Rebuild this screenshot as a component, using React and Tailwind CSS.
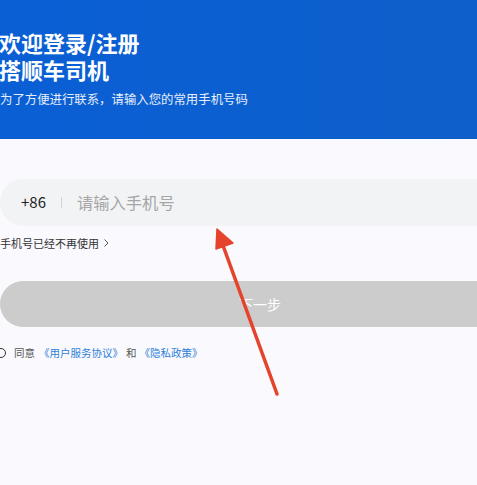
import React from "react";

const font = { fontFamily: '"Noto Sans CJK SC", "Noto Sans", sans-serif' };

// red annotation arrow drawn over the page
const Arrow = () => (
  <svg
    className="absolute left-0 top-0 pointer-events-none"
    width="477"
    height="485"
    viewBox="0 0 477 485"
  >
    <line x1="277" y1="394" x2="221" y2="240" stroke="#e5432b" strokeWidth="3.5" strokeLinecap="round" />
    <polygon points="217,229 216,249 233,243" fill="#e5432b" stroke="#e5432b" strokeWidth="1.5" strokeLinejoin="round" />
  </svg>
);

export default function App() {
  return (
    <div className="relative w-[477px] h-[485px] overflow-hidden bg-[#f9f9fe]" style={font}>
      <div className="h-[139px] bg-gradient-to-r from-[#0a5fd5] to-[#0e5fca] pt-[29px] text-white">
        <h1 className="text-[22px] font-bold leading-[27px] -ml-[1px]">
          欢迎登录/注册
          <br />
          搭顺车司机
        </h1>
        <p className="mt-[8px] text-[12.4px] leading-[16px] text-white/90">为了方便进行联系，请输入您的常用手机号码</p>
      </div>

      <div className="w-[520px] pt-[40px]">
        <div className="flex h-[47px] items-center rounded-full bg-[#f2f3f5] pl-[21px]">
          <span className="text-[15px] text-[#222]">+86</span>
          <span className="mx-[15px] h-[11px] w-px bg-[#d4d4d4]" />
          <span className="text-[16.3px] text-[#a6a6a6]">请输入手机号</span>
        </div>

        <div className="mt-[9px] flex items-center gap-[5px] text-[11px] leading-[16px] text-[#333]">
          <span>手机号已经不再使用</span>
          <svg width="5" height="8" viewBox="0 0 5 8" fill="none" stroke="#555" strokeWidth="1">
            <path d="M0.5 0.5 L4 4 L0.5 7.5" />
          </svg>
        </div>

        <button className="mt-[30px] flex h-[46px] w-full items-center justify-center rounded-full bg-[#cccccc] text-[14px] text-white">
          下一步
        </button>

        <div className="mt-[18px] flex items-center text-[10.5px] leading-[16px]">
          <span className="-ml-[4px] h-[10px] w-[10px] rounded-full border border-[#333]" />
          <span className="ml-[8px] text-[#555]">同意</span>
          <span className="ml-[4px] text-[#2f7fd8]">《用户服务协议》</span>
          <span className="mx-[3px] text-[#555]">和</span>
          <span className="text-[#2f7fd8]">《隐私政策》</span>
        </div>
      </div>

      <Arrow />
    </div>
  );
}
